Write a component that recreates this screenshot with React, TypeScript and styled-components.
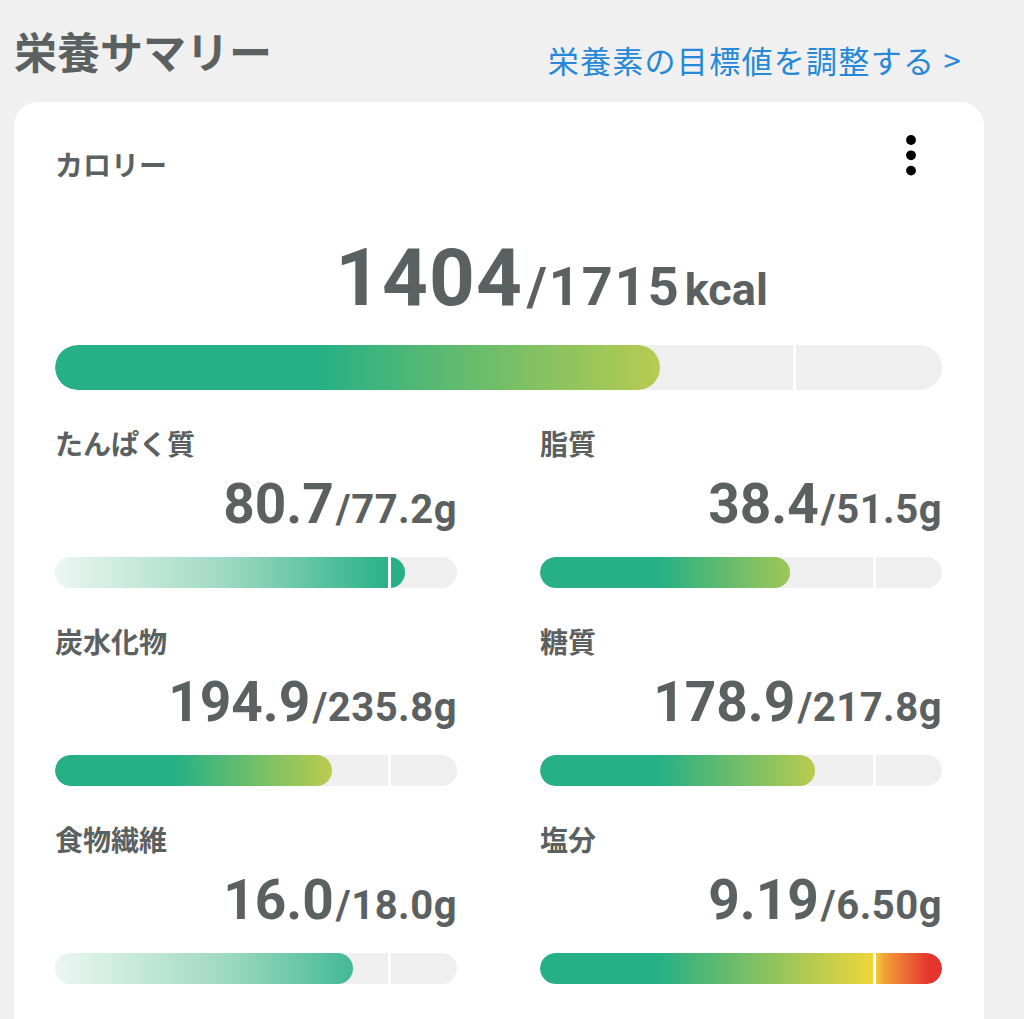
import React from "react";
import styled, { createGlobalStyle } from "styled-components";

const GlobalStyle = createGlobalStyle`
  html, body {
    margin: 0;
    padding: 0;
    background: #f0f0f0;
  }
  body {
    font-family: "Roboto", "Noto Sans CJK JP", sans-serif;
    color: #5b6061;
  }
`;

const Page = styled.div`
  padding: 27px 40px 0 14px;
  min-height: 1019px;
  box-sizing: border-box;
`;

const Header = styled.div`
  display: flex;
  justify-content: space-between;
  align-items: flex-start;
`;

const Title = styled.h1`
  margin: 0;
  font-family: "Noto Sans CJK JP", sans-serif;
  font-size: 43px;
  line-height: 46px;
  font-weight: 700;
  color: #5b6061;
`;

const AdjustLink = styled.a`
  margin: 16px 22px 0 0;
  font-family: "Noto Sans CJK JP", sans-serif;
  font-size: 31px;
  line-height: 34px;
  font-weight: 400;
  letter-spacing: 1.3px;
  color: #2688d9;
  text-decoration: none;
`;

const Card = styled.section`
  margin-top: 25px;
  background: #ffffff;
  border-radius: 24px 24px 0 0;
  padding: 46px 42px 40px 41px;
`;

const CardHead = styled.div`
  display: flex;
  justify-content: space-between;
  align-items: flex-start;
`;

const Label = styled.div`
  font-family: "Noto Sans CJK JP", sans-serif;
  font-size: 28px;
  line-height: 32px;
  font-weight: 700;
  color: #5b6061;
`;

const MoreButton = styled.button`
  display: flex;
  margin: -14px 25px 0 0;
  padding: 0;
  border: none;
  background: none;
`;

const CalorieValue = styled.div`
  margin-top: 58px;
  padding-left: 106px;
  text-align: center;
  font-family: "Roboto", sans-serif;
  font-weight: 700;
  font-size: 80px;
  line-height: 80px;
  color: #5b6061;
  white-space: nowrap;
`;

const BigNum = styled.span<{ $spacing: number }>`
  letter-spacing: ${(p) => p.$spacing}px;
`;

const SubNum = styled.span<{ $size: number; $gap: number; $spacing: number }>`
  font-size: ${(p) => p.$size}px;
  line-height: 1;
  margin-left: ${(p) => p.$gap}px;
  letter-spacing: ${(p) => p.$spacing}px;
`;

const Track = styled.div<{ $h: number }>`
  position: relative;
  display: flex;
  height: ${(p) => p.$h}px;
  border-radius: 999px;
  background: #efefef;
  overflow: hidden;
`;

const Fill = styled.div<{ $kind: "goal" | "limit" }>`
  height: 100%;
  border-radius: 999px;
  background-repeat: no-repeat;
  background-position: left center;
  background-image: ${(p) =>
    p.$kind === "goal"
      ? "linear-gradient(90deg, #ebf7f2 0%, #9fd9c3 42%, #27b085 84%, #27b085 100%)"
      : "linear-gradient(90deg, #27b085 0%, #27b085 30%, #f0d63a 83.3%, #f2a238 85.5%, #e5332e 97%, #e5332e 100%)"};
`;

const Marker = styled.div`
  position: absolute;
  top: 0;
  bottom: 0;
  left: calc(83.333% - 1.5px);
  width: 3px;
  background: #ffffff;
`;

const CalorieBar = styled.div`
  margin-top: 27px;
`;

const Grid = styled.div`
  margin-top: 37px;
  display: grid;
  grid-template-columns: 1fr 1fr;
  column-gap: 83px;
  row-gap: 37px;
`;

const Item = styled.div`
  display: flex;
  flex-direction: column;
`;

const NutValue = styled.div`
  margin-top: 17px;
  text-align: right;
  font-family: "Roboto", sans-serif;
  font-weight: 700;
  font-size: 55px;
  line-height: 56px;
  color: #5b6061;
  white-space: nowrap;
`;

const NutBar = styled.div`
  margin-top: 25px;
`;

type Kind = "goal" | "limit";

const Bar: React.FC<{ value: number; target: number; kind: Kind; h: number }> = ({
  value,
  target,
  kind,
  h,
}) => {
  const pct = Math.min(value / target / 1.2, 1) * 100;
  return (
    <Track $h={h}>
      <Fill
        $kind={kind}
        style={{ width: `${pct}%`, backgroundSize: `${(100 / pct) * 100}% 100%` }}
      />
      <Marker />
    </Track>
  );
};

const DotsIcon = () => (
  <svg width="12" height="42" viewBox="0 0 12 42">
    <circle cx="6" cy="6" r="4.9" fill="#000" />
    <circle cx="6" cy="21.3" r="4.9" fill="#000" />
    <circle cx="6" cy="36.6" r="4.9" fill="#000" />
  </svg>
);

const nutrients: { label: string; value: string; target: string; kind: Kind }[] = [
  { label: "たんぱく質", value: "80.7", target: "77.2", kind: "goal" },
  { label: "脂質", value: "38.4", target: "51.5", kind: "limit" },
  { label: "炭水化物", value: "194.9", target: "235.8", kind: "limit" },
  { label: "糖質", value: "178.9", target: "217.8", kind: "limit" },
  { label: "食物繊維", value: "16.0", target: "18.0", kind: "goal" },
  { label: "塩分", value: "9.19", target: "6.50", kind: "limit" },
];

export default function App() {
  return (
    <>
      <GlobalStyle />
      <Page>
        <Header>
          <Title>栄養サマリー</Title>
          <AdjustLink href="#">栄養素の目標値を調整する &gt;</AdjustLink>
        </Header>
        <Card>
          <CardHead>
            <Label>カロリー</Label>
            <MoreButton aria-label="メニュー">
              <DotsIcon />
            </MoreButton>
          </CardHead>
          <CalorieValue>
            <BigNum $spacing={1}>1404</BigNum>
            <SubNum $size={54} $gap={4} $spacing={2}>
              /1715
            </SubNum>
            <SubNum $size={45} $gap={4} $spacing={0}>
              kcal
            </SubNum>
          </CalorieValue>
          <CalorieBar>
            <Bar value={1404} target={1715} kind="limit" h={45} />
          </CalorieBar>
          <Grid>
            {nutrients.map((n) => (
              <Item key={n.label}>
                <Label>{n.label}</Label>
                <NutValue>
                  <BigNum $spacing={0}>{n.value}</BigNum>
                  <SubNum $size={40} $gap={2} $spacing={0.5}>
                    /{n.target}g
                  </SubNum>
                </NutValue>
                <NutBar>
                  <Bar
                    value={parseFloat(n.value)}
                    target={parseFloat(n.target)}
                    kind={n.kind}
                    h={31}
                  />
                </NutBar>
              </Item>
            ))}
          </Grid>
        </Card>
      </Page>
    </>
  );
}
